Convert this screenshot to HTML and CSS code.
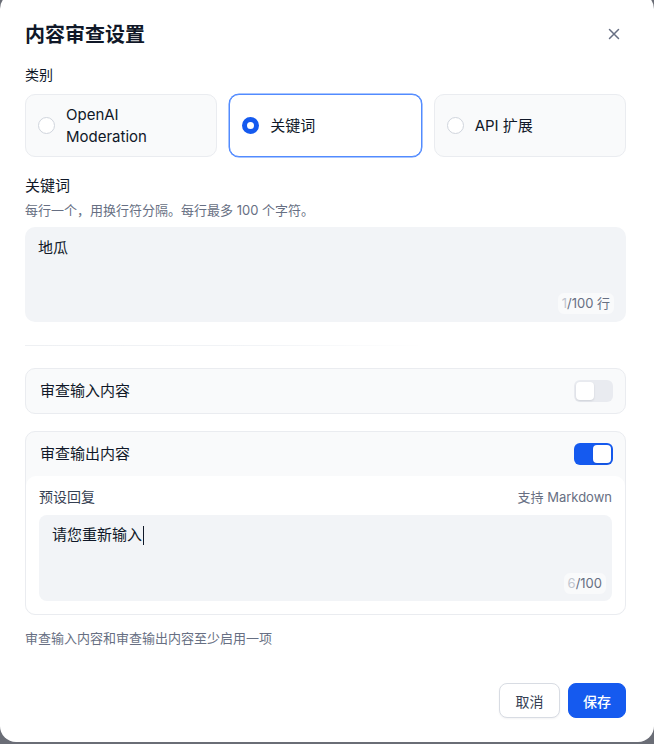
FILE: index.html
```html
<!DOCTYPE html>
<html lang="zh-CN">
<head>
<meta charset="utf-8">
<title>内容审查设置</title>
<link rel="stylesheet" href="styles.css">
</head>
<body>
<div class="modal">
  <div class="header">
    <h1 class="title">内容审查设置</h1>
    <button class="close" aria-label="关闭">
      <svg width="12" height="12" viewBox="0 0 12 12"><path d="M1.5 1.5 L10.5 10.5 M10.5 1.5 L1.5 10.5" stroke="#676f83" stroke-width="1.5" stroke-linecap="round"/></svg>
    </button>
  </div>

  <div class="label">类别</div>
  <div class="options">
    <div class="option">
      <span class="radio"></span>
      <span class="opt-text">OpenAI<br>Moderation</span>
    </div>
    <div class="option selected">
      <span class="radio"></span>
      <span class="opt-text">关键词</span>
    </div>
    <div class="option">
      <span class="radio"></span>
      <span class="opt-text">API 扩展</span>
    </div>
  </div>

  <div class="label keyword-label">关键词</div>
  <div class="hint">每行一个，用换行符分隔。每行最多 100 个字符。</div>
  <div class="textarea keywords">
    <div class="ta-text">地瓜</div>
    <div class="counter"><span class="cur">1</span>/100 行</div>
  </div>

  <div class="divider"></div>

  <div class="card">
    <div class="card-row">
      <span class="card-title">审查输入内容</span>
      <span class="toggle"><span class="knob"></span></span>
    </div>
  </div>

  <div class="card output">
    <div class="card-row">
      <span class="card-title">审查输出内容</span>
      <span class="toggle on"><span class="knob"></span></span>
    </div>
    <div class="card-body">
      <div class="body-head">
        <span class="body-label">预设回复</span>
        <span class="body-note">支持 Markdown</span>
      </div>
      <div class="textarea reply">
        <div class="ta-text">请您重新输入<span class="caret"></span></div>
        <div class="counter"><span class="cur">6</span>/100</div>
      </div>
    </div>
  </div>

  <div class="note">审查输入内容和审查输出内容至少启用一项</div>

  <div class="footer">
    <button class="btn cancel">取消</button>
    <button class="btn save">保存</button>
  </div>
</div>
</body>
</html>
```

FILE: styles.css
```css
* { box-sizing: border-box; }
html, body { margin: 0; padding: 0; }
body {
  width: 654px;
  height: 744px;
  overflow: hidden;
  background: #6a6d76;
  font-family: Inter, "Noto Sans CJK SC", sans-serif;
  color: #101828;
}
.modal {
  width: 654px;
  height: 749px;
  margin-top: -7px;
  background: #fff;
  border-radius: 16px;
  padding: 28px 28px 0 25px;
  display: flex;
  flex-direction: column;
}
.header {
  display: flex;
  align-items: center;
  justify-content: space-between;
  height: 28px;
}
.title {
  margin: 0;
  font-size: 20px;
  line-height: 28px;
  font-weight: 700;
  color: #101828;
}
.close {
  border: 0;
  background: none;
  padding: 0;
  width: 20px;
  height: 20px;
  display: flex;
  align-items: center;
  justify-content: center;
  margin-right: 2px;
  margin-top: -2px;
}
.label {
  margin-top: 16px;
  font-size: 14px;
  line-height: 20px;
  color: #101828;
}
.options {
  margin-top: 9px;
  display: grid;
  grid-template-columns: 1fr 1fr 1fr;
  gap: 12px;
}
.option {
  height: 63px;
  border: 1px solid #eaecf0;
  background: #f9fafb;
  border-radius: 10px;
  display: flex;
  align-items: center;
  padding-left: 12px;
  gap: 11px;
}
.option.selected {
  background: #fff;
  border: 1px solid #528bff;
  box-shadow: 0 0 0 0.5px #528bff;
}
.radio {
  flex: none;
  width: 17px;
  height: 17px;
  border-radius: 50%;
  border: 1px solid #d0d5dd;
  background: #fff;
}
.selected .radio {
  border: 5px solid #155aef;
}
.opt-text {
  font-size: 15px;
  line-height: 22px;
  color: #101828;
}
.keyword-label {
  margin-top: 18px;
  font-size: 15px;
  line-height: 22px;
}
.hint {
  margin-top: 4px;
  font-size: 13px;
  line-height: 18px;
  color: #676f83;
}
.textarea {
  position: relative;
  background: #f2f4f7;
  border-radius: 10px;
}
.keywords {
  margin-top: 8px;
  height: 95px;
  padding: 10px 13px;
}
.ta-text {
  font-size: 15px;
  line-height: 22px;
  color: #101828;
  display: flex;
  align-items: center;
}
.caret {
  display: inline-block;
  width: 1px;
  height: 19px;
  background: #101828;
  margin-left: 1px;
}
.counter {
  position: absolute;
  right: 12px;
  bottom: 8px;
  height: 21px;
  padding: 0 4px;
  border-radius: 6px;
  background: #f9fafb;
  font-size: 13px;
  line-height: 21px;
  color: #676f83;
}
.counter .cur { color: #c1c6cf; }
.divider {
  margin-top: 23px;
  height: 1px;
  width: 400px;
  background: linear-gradient(90deg, #eef0f3 0%, #f2f4f7 60%, rgba(255,255,255,0) 100%);
}
.card {
  margin-top: 22px;
  border: 1px solid #eaecf0;
  background: #f9fafb;
  border-radius: 10px;
}
.card.output { margin-top: 17px; }
.card-row {
  height: 44px;
  display: flex;
  align-items: center;
  justify-content: space-between;
  padding: 0 12px 0 14px;
}
.card-title {
  font-size: 15px;
  line-height: 22px;
  color: #101828;
}
.toggle {
  width: 39px;
  height: 22px;
  border-radius: 6px;
  background: #e9ebf0;
  padding: 2px;
  display: flex;
  justify-content: flex-start;
}
.toggle.on {
  background: #155aef;
  justify-content: flex-end;
}
.knob {
  width: 18px;
  height: 18px;
  border-radius: 4px;
  background: #fff;
  box-shadow: 0 1px 2px rgba(16,24,40,0.12);
}
.card-body {
  background: #fff;
  border-radius: 10px;
  padding: 10px 13px 12px 13px;
  height: 138px;
}
.body-head {
  display: flex;
  justify-content: space-between;
  align-items: center;
  height: 22px;
}
.body-label {
  font-size: 14px;
  line-height: 20px;
  color: #354052;
}
.body-note {
  font-size: 13px;
  line-height: 18px;
  color: #676f83;
}
.reply {
  margin-top: 7px;
  height: 86px;
  border-radius: 8px;
  padding: 9px 13px;
}
.reply .counter { right: 6px; bottom: 7px; }
.note {
  margin-top: 14px;
  font-size: 13px;
  line-height: 18px;
  color: #676f83;
}
.footer {
  margin-top: 36px;
  display: flex;
  justify-content: flex-end;
  gap: 8px;
}
.btn {
  height: 35px;
  border-radius: 8px;
  font-family: Inter, "Noto Sans CJK SC", sans-serif;
  font-size: 14px;
  padding: 0 14px;
  cursor: pointer;
}
.cancel {
  width: 61px;
  background: #fff;
  border: 1px solid #d8dce3;
  color: #354052;
  box-shadow: 0 1px 2px rgba(16,24,40,0.05);
}
.save {
  width: 58px;
  background: #155aef;
  border: 1px solid #155aef;
  color: #fff;
  font-weight: 500;
}
```
